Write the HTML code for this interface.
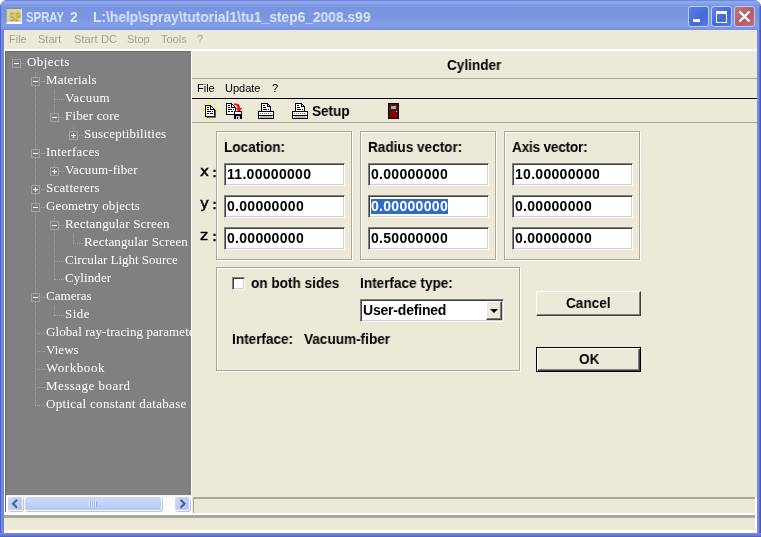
<!DOCTYPE html>
<html><head><meta charset="utf-8"><title>SPRAY 2</title>
<style>
html,body{margin:0;padding:0;}
body{width:761px;height:537px;overflow:hidden;position:relative;background:#fff;font-family:"Liberation Sans",sans-serif;}
.abs,.abs *{position:absolute;}
.lbl,.xl,.tt,.row,.inp span,.mt,#icon span{will-change:transform;}
i,b{display:block;font-style:normal;font-weight:normal;}
#frame{left:0;top:0;width:761px;height:537px;background:linear-gradient(90deg,#4e60ca 0,#4e60ca 1px,#7287dc 1px,#7287dc 757px,#7c90e6 757px,#7589e0 759px,#5a6cd0 759px,#5a6cd0 760px,#4456c4 760px);border-radius:7px 7px 0 0;}
#bottomb{left:0;top:533px;width:761px;height:4px;background:linear-gradient(#7b8ee2,#6a7bd6 50%,#4c5cc4);}
#title{left:0;top:0;width:761px;height:30px;background:linear-gradient(#6f8adc 0,#6f8adc 1px,#8da8f0 1px,#8aa5ee 3px,#7d99e4 5px,#7995df 8px,#7a96df 18px,#809ce7 23px,#84a0ea 26px,#7b96e2 28px,#7590de 30px);border-radius:7px 7px 0 0;}
.tt{top:10px;font:bold 14px "Liberation Sans",sans-serif;color:#d8e4f8;white-space:pre;line-height:15px;transform-origin:0 0;}
#icon{left:6px;top:8px;width:14px;height:13px;background:#d9ccc0;border:1px solid;border-color:#8c8c7a #e8e4e0 #fff #a4a496;border-bottom-width:2px;}
#icon span{left:1.5px;top:0px;font:bold 12px "Liberation Serif",serif;color:#d2d21c;text-shadow:0.5px 0.5px 0 #8a8a30;line-height:14px;transform:scaleX(0.8);transform-origin:0 0;}
.cb{top:6px;width:19px;height:19px;border:1px solid #b9caf6;border-radius:3px;}
#client{left:4px;top:30px;width:753px;height:503px;background:#ece9d8;}
#menubar span{will-change:transform;top:33px;font-size:11px;color:#a5a293;white-space:pre;}
#wline{left:4px;top:49px;width:753px;height:2px;background:#fff;}
#tree{left:5px;top:51px;width:186px;height:461px;background:#808080;border-left:1px solid #6b6b6b;border-top:1px solid #6b6b6b;box-sizing:border-box;overflow:hidden;font:13px "Liberation Serif",serif;color:#fff;letter-spacing:0.18px;}
.row{height:18px;line-height:18px;white-space:nowrap;}
.vl{width:1px;background:repeating-linear-gradient(#a2a2a2 0,#a2a2a2 1px,transparent 1px,transparent 2px);}
.hl{height:1px;background:repeating-linear-gradient(90deg,#a2a2a2 0,#a2a2a2 1px,transparent 1px,transparent 2px);}
.bx{width:7px;height:7px;border:1px solid #a0a0a0;background:#808080;}
.bx:before{content:"";position:absolute;left:1px;top:3px;width:5px;height:1px;background:#fff;}
.pl:after{content:"";position:absolute;left:3px;top:1px;width:1px;height:5px;background:#fff;}
#hscroll{left:6px;top:495px;width:185px;height:17px;background:linear-gradient(#f4f3ee,#fefefb 4px,#fefefb);}
.sbtn{top:2px;width:14px;height:13px;border-radius:2px;background:linear-gradient(135deg,#cddafc,#b9cbf7 70%,#aebff0);box-shadow:0 0 0 1px #fff,1px 1px 0 1px #b4c4e8;}
#thumb{left:19px;top:2px;width:136px;height:13px;border-radius:2px;background:linear-gradient(#cbd9fc,#c2d2fa 50%,#b3c6f5);box-shadow:0 0 0 1px #fff,1px 1px 0 1px #b4c4e8;}
.hline{left:192px;width:565px;height:1px;}
.lbl{font:bold 14px "Liberation Sans",sans-serif;color:#000;white-space:pre;line-height:16px;transform:scaleX(0.97);transform-origin:0 0;}
.xl{font:14px "DejaVu Sans","Liberation Sans",sans-serif;line-height:16px;color:#000;white-space:pre;-webkit-text-stroke:0.45px #000;transform:scaleX(1.08);transform-origin:0 0;}
.mt{top:82px;font-size:11px;white-space:pre;line-height:13px;color:#000;}
.gb{border:1px solid #aca899;box-shadow:1px 1px 0 #fff, inset 1px 1px 0 #fff;box-sizing:border-box;}
.inp{width:121px;height:23px;box-sizing:border-box;background:#fff;border:1px solid;border-color:#808080 #fff #fff #808080;box-shadow:inset 1px 1px 0 #404040, inset -1px -1px 0 #d4d0c8;}
.inp span{left:2px;top:2px;font:bold 14px "Liberation Sans",sans-serif;letter-spacing:0.3px;line-height:16px;color:#000;white-space:pre;}
.btn{width:105px;box-sizing:border-box;background:#ece9d8;}
</style></head><body>
<div class="abs" id="frame"></div>
<div class="abs" id="title"></div>
<div class="abs" id="bottomb"></div>
<div class="abs" style="left:0;top:6px;width:1px;height:24px;background:#5669d0"></div><div class="abs" style="left:760px;top:6px;width:1px;height:24px;background:#4c5fca"></div><div class="abs" style="left:759px;top:5px;width:1px;height:25px;background:#6277d8"></div>
<div class="abs" id="icon"><span>SP</span></div>
<div class="abs tt" style="left:25.5px;transform:scaleX(0.81)">SPRAY</div><div class="abs tt" style="left:70px;transform:scaleX(0.95)">2</div>
<div class="abs tt" style="left:93px;transform:scaleX(0.985)">L:\help\spray\tutorial1\tu1_step6_2008.s99</div>
<div class="abs cb" style="left:688px;background:linear-gradient(135deg,#5f80e8,#4468d8 60%,#5a7ce6)"><i style="left:4px;top:12px;width:7px;height:3px;background:#fff"></i></div>
<div class="abs cb" style="left:711px;background:linear-gradient(135deg,#5f80e8,#4468d8 60%,#5a7ce6)"><i style="left:4px;top:4px;width:9px;height:8px;border:1px solid #fff;border-top-width:3px"></i></div>
<div class="abs cb" style="left:734px;background:linear-gradient(135deg,#c2727c,#b4606c 60%,#c0707a)"><svg style="left:3px;top:3px" width="13" height="13" viewBox="0 0 13 13"><path d="M1.5 1.5L11.5 11.5M11.5 1.5L1.5 11.5" stroke="#fff" stroke-width="2.2" fill="none"/></svg></div>
<div class="abs" id="client"></div>
<div class="abs" id="menubar"><span style="left:8.5px">File</span><span style="left:37.5px">Start</span><span style="left:73.5px;letter-spacing:0.1px">Start DC</span><span style="left:126.5px">Stop</span><span style="left:161px">Tools</span><span style="left:197px">?</span></div>
<div class="abs" id="wline"></div>
<div class="abs" id="tree">
<i class="vl" style="left:29px;top:19px;height:335px;background-position:0 -1px"></i>
<i class="vl" style="left:48px;top:37px;height:24px;background-position:0 -1px"></i>
<i class="vl" style="left:67px;top:73px;height:6px;background-position:0 -1px"></i>
<i class="vl" style="left:48px;top:109px;height:6px;background-position:0 -1px"></i>
<i class="vl" style="left:48px;top:163px;height:65px;background-position:0 -1px"></i>
<i class="vl" style="left:67px;top:181px;height:11px;background-position:0 -1px"></i>
<i class="vl" style="left:48px;top:253px;height:11px;background-position:0 -1px"></i>
<i class="hl" style="left:15px;top:11px;width:5px;background-position:0px 0"></i>
<b class="bx mi" style="left:6px;top:7px"></b>
<div class="row" style="left:20.5px;top:1px;letter-spacing:0.42px">Objects</div>
<i class="hl" style="left:34px;top:29px;width:5px;background-position:-1px 0"></i>
<b class="bx mi" style="left:25px;top:25px"></b>
<div class="row" style="left:39.5px;top:19px;letter-spacing:0.19px">Materials</div>
<i class="hl" style="left:49px;top:47px;width:9px;background-position:0px 0"></i>
<div class="row" style="left:58.5px;top:37px;letter-spacing:0.42px">Vacuum</div>
<i class="hl" style="left:53px;top:65px;width:5px;background-position:0px 0"></i>
<b class="bx mi" style="left:44px;top:61px"></b>
<div class="row" style="left:58.5px;top:55px;letter-spacing:0.16px">Fiber core</div>
<i class="hl" style="left:72px;top:83px;width:5px;background-position:-1px 0"></i>
<b class="bx pl" style="left:63px;top:79px"></b>
<div class="row" style="left:77.5px;top:73px;letter-spacing:0.18px">Susceptibilities</div>
<i class="hl" style="left:34px;top:101px;width:5px;background-position:-1px 0"></i>
<b class="bx mi" style="left:25px;top:97px"></b>
<div class="row" style="left:39.5px;top:91px;letter-spacing:0.27px">Interfaces</div>
<i class="hl" style="left:53px;top:119px;width:5px;background-position:0px 0"></i>
<b class="bx pl" style="left:44px;top:115px"></b>
<div class="row" style="left:58.5px;top:109px;letter-spacing:0.10px">Vacuum-fiber</div>
<i class="hl" style="left:34px;top:137px;width:5px;background-position:-1px 0"></i>
<b class="bx pl" style="left:25px;top:133px"></b>
<div class="row" style="left:39.5px;top:127px;letter-spacing:0.27px">Scatterers</div>
<i class="hl" style="left:34px;top:155px;width:5px;background-position:-1px 0"></i>
<b class="bx mi" style="left:25px;top:151px"></b>
<div class="row" style="left:39.5px;top:145px;letter-spacing:0.11px">Geometry objects</div>
<i class="hl" style="left:53px;top:173px;width:5px;background-position:0px 0"></i>
<b class="bx mi" style="left:44px;top:169px"></b>
<div class="row" style="left:58.5px;top:163px;letter-spacing:0.18px">Rectangular Screen</div>
<i class="hl" style="left:68px;top:191px;width:9px;background-position:-1px 0"></i>
<div class="row" style="left:77.5px;top:181px;letter-spacing:0.14px">Rectangular Screen</div>
<i class="hl" style="left:49px;top:209px;width:9px;background-position:0px 0"></i>
<div class="row" style="left:58.5px;top:199px;letter-spacing:-0.03px">Circular Light Source</div>
<i class="hl" style="left:49px;top:227px;width:9px;background-position:0px 0"></i>
<div class="row" style="left:58.5px;top:217px;letter-spacing:0.09px">Cylinder</div>
<i class="hl" style="left:34px;top:245px;width:5px;background-position:-1px 0"></i>
<b class="bx mi" style="left:25px;top:241px"></b>
<div class="row" style="left:39.5px;top:235px;letter-spacing:0.03px">Cameras</div>
<i class="hl" style="left:49px;top:263px;width:9px;background-position:0px 0"></i>
<div class="row" style="left:58.5px;top:253px;letter-spacing:0.43px">Side</div>
<i class="hl" style="left:30px;top:281px;width:9px;background-position:-1px 0"></i>
<div class="row" style="left:39.5px;top:271px;letter-spacing:0.08px">Global ray-tracing parameters</div>
<i class="hl" style="left:30px;top:299px;width:9px;background-position:-1px 0"></i>
<div class="row" style="left:39.5px;top:289px;letter-spacing:0.05px">Views</div>
<i class="hl" style="left:30px;top:317px;width:9px;background-position:-1px 0"></i>
<div class="row" style="left:39.5px;top:307px;letter-spacing:0.56px">Workbook</div>
<i class="hl" style="left:30px;top:335px;width:9px;background-position:-1px 0"></i>
<div class="row" style="left:39.5px;top:325px;letter-spacing:0.47px">Message board</div>
<i class="hl" style="left:30px;top:353px;width:9px;background-position:-1px 0"></i>
<div class="row" style="left:39.5px;top:343px;letter-spacing:0.31px">Optical constant database</div>
</div>
<div class="abs" id="hscroll">
 <div class="sbtn" style="left:2px"><svg style="left:3px;top:2px" width="8" height="10" viewBox="0 0 8 10"><path d="M6 0.800L2 4.750L6 8.700" stroke="#4d6185" stroke-width="2.100" fill="none"/></svg></div>
 <div id="thumb"><i style="left:64px;top:4px;width:8px;height:6px;background:repeating-linear-gradient(90deg,#eef4fe 0,#eef4fe 1px,#8cb0f8 1px,#8cb0f8 2px)"></i></div>
 <div class="sbtn" style="left:169px"><svg style="left:4px;top:2px" width="8" height="10" viewBox="0 0 8 10"><path d="M1.500 0.800L5.500 4.750L1.500 8.700" stroke="#4d6185" stroke-width="2.100" fill="none"/></svg></div>
</div>
<div class="abs" style="left:191px;top:51px;width:1px;height:462px;background:#fff"></div>
<!-- right panel -->
<div class="abs lbl" style="left:446.5px;top:57px;">Cylinder</div>
<div class="abs hline" style="top:78px;background:#aca899"></div>
<div class="abs mt" style="left:196.5px">File</div>
<div class="abs mt" style="left:224.5px">Update</div>
<div class="abs mt" style="left:271.5px">?</div>
<div class="abs hline" style="top:98px;background:#000"></div>
<div class="abs hline" style="top:122px;background:#aca899"></div>
<!-- toolbar icons -->
<svg class="abs" style="left:200px;top:100px" width="204" height="22" viewBox="200 100 204 22" shape-rendering="crispEdges">
 <g>
  <path d="M203 103l2.500 2.500M216.500 103l-2.500 2.500M203 118.500l2.500-2.500M216.500 118.500l-2 -2M201.500 110.500h3.500M215.500 110.500h3M208.500 101.500v3M209.500 117v2" stroke="#f2f03a" stroke-width="1.600" shape-rendering="auto"/>
  <path d="M205.500 105.500h5l4 4v7h-9z" fill="#fff" stroke="#000"/>
  <path d="M206.500 117.300h9v-7.300" fill="none" stroke="#555" shape-rendering="auto"/>
  <path d="M210.500 105.500v4h4" fill="none" stroke="#000"/>
  <path d="M207 107.500h2M207 109.500h2M207 111.500h4M212 111.500h1M207 113.500h2M210 113.500h3" stroke="#000"/>
 </g>
 <g>
  <path d="M226.500 103.500h5l4 4v7h-9z" fill="#fff" stroke="#000"/>
  <path d="M231.500 103.500v4h4" fill="none" stroke="#000"/>
  <path d="M228 105.500h2M228 107.500h2M228 109.500h4M233 109.500h1M228 111.500h2M231 111.500h2" stroke="#000"/>
  <path d="M234 103.500c4 -0.500 6 0.500 6 4.500h2.500l-3.500 4l-3.500 -4h2c0 -2 -1 -3 -3.500 -3z" fill="#f01010" shape-rendering="auto"/>
  <rect x="234" y="111" width="8" height="8" fill="#000"/>
  <rect x="235" y="111" width="3" height="1" fill="#2030c0"/>
  <rect x="235" y="112" width="6" height="2" fill="#fff"/>
  <rect x="236" y="116" width="4" height="3" fill="#c8c8c8"/>
  <rect x="237" y="117" width="1" height="2" fill="#000"/>
 </g>
 <g>
  <path d="M261.500 103.500h6l3 3v5h-9z" fill="#fff" stroke="#000"/>
  <path d="M267.500 103.500v3h3" fill="none" stroke="#000"/>
  <path d="M263 105.500h2M263 107.500h3M263 109.500h4M268 109.500h1" stroke="#000"/>
  <rect x="258.500" y="111.500" width="15" height="7" fill="#fff" stroke="#000"/>
  <path d="M260 113.500h12" stroke="#707070" stroke-dasharray="1 1"/>
  <rect x="259" y="115" width="14" height="1" fill="#000"/>
  <rect x="260" y="116" width="12" height="2" fill="#b8b8b8"/>
  <rect x="270" y="113" width="1" height="1" fill="#e06060"/>
 </g>
 <g transform="translate(34 0)">
  <path d="M261.500 103.500h6l3 3v5h-9z" fill="#fff" stroke="#000"/>
  <path d="M267.500 103.500v3h3" fill="none" stroke="#000"/>
  <path d="M263 105.500h2M263 107.500h3M263 109.500h4M268 109.500h1" stroke="#000"/>
  <rect x="258.500" y="111.500" width="15" height="7" fill="#fff" stroke="#000"/>
  <path d="M260 113.500h12" stroke="#707070" stroke-dasharray="1 1"/>
  <rect x="259" y="115" width="14" height="1" fill="#000"/>
  <rect x="260" y="116" width="12" height="2" fill="#b8b8b8"/>
  <rect x="270" y="113" width="1" height="1" fill="#e06060"/>
 </g>
 <g>
  <rect x="388.500" y="103.500" width="10" height="15" fill="#800000" stroke="#000"/>
  <rect x="391" y="106" width="5" height="3" fill="#30e0f0"/>
  <rect x="396" y="111" width="1" height="1" fill="#ffd0d0"/>
 </g>
</svg>
<div class="abs lbl" style="left:312px;top:103px">Setup</div>
<!-- group boxes -->
<div class="abs gb" style="left:216px;top:131px;width:136px;height:129px"></div>
<div class="abs gb" style="left:360px;top:131px;width:136px;height:129px"></div>
<div class="abs gb" style="left:504px;top:131px;width:136px;height:129px"></div>
<div class="abs lbl" style="left:223.5px;top:139px">Location:</div>
<div class="abs lbl" style="left:367.5px;top:139px">Radius vector:</div>
<div class="abs lbl" style="left:512px;top:139px;letter-spacing:-0.2px">Axis vector:</div>
<div class="abs xl" style="left:199.5px;top:163px">x</div><div class="abs xl" style="left:212px;top:164px">:</div>
<div class="abs xl" style="left:199.5px;top:195px">y</div><div class="abs xl" style="left:212px;top:196px">:</div>
<div class="abs xl" style="left:199.5px;top:227px">z</div><div class="abs xl" style="left:212px;top:228px">:</div>
<div class="abs inp" style="left:224px;top:163px"><span>11.00000000</span></div>
<div class="abs inp" style="left:224px;top:195px"><span>0.00000000</span></div>
<div class="abs inp" style="left:224px;top:227px"><span>0.00000000</span></div>
<div class="abs inp" style="left:368px;top:163px"><span>0.00000000</span></div>
<div class="abs inp" style="left:368px;top:195px"><i style="left:2px;top:3px;width:77px;height:15px;background:#316ac5"></i><span style="color:#fff">0.00000000</span></div>
<div class="abs inp" style="left:368px;top:227px"><span>0.50000000</span></div>
<div class="abs inp" style="left:512px;top:163px"><span>10.00000000</span></div>
<div class="abs inp" style="left:512px;top:195px"><span>0.00000000</span></div>
<div class="abs inp" style="left:512px;top:227px"><span>0.00000000</span></div>
<!-- lower group -->
<div class="abs gb" style="left:216px;top:267px;width:304px;height:104px"></div>
<div class="abs" style="left:232px;top:277px;width:13px;height:13px;box-sizing:border-box;background:#fff;border:1px solid;border-color:#808080 #fff #fff #808080;box-shadow:inset 1px 1px 0 #404040, inset -1px -1px 0 #d4d0c8"></div>
<div class="abs lbl" style="left:251px;top:275px;">on both sides</div>
<div class="abs lbl" style="left:359.5px;top:275px">Interface type:</div>
<div class="abs inp" style="left:360px;top:299px;width:144px"><span style="left:2px;letter-spacing:-0.2px">User-defined</span>
 <i style="left:125px;top:1px;width:16px;height:19px;background:#ece9d8;box-sizing:border-box;border:1px solid;border-color:#fff #404040 #404040 #fff;box-shadow:inset -1px -1px 0 #808080"></i>
 <i style="left:129px;top:9px;width:0;height:0;border:4px solid transparent;border-top:4px solid #000;border-bottom:0"></i>
</div>
<div class="abs lbl" style="left:231.5px;top:331px">Interface:</div>
<div class="abs lbl" style="left:303.5px;top:331px">Vacuum-fiber</div>
<!-- buttons -->
<div class="abs btn" style="left:536px;top:291px;height:25px;border:1px solid;border-color:#fff #404040 #404040 #fff;box-shadow:inset -1px -1px 0 #808080;"></div>
<div class="abs btn" style="left:536px;top:347px;height:25px;border:1px solid #000;box-shadow:inset 1px 1px 0 #fff, inset -1px -1px 0 #404040, inset -2px -2px 0 #808080;"></div>
<div class="abs lbl" style="left:566px;top:295px">Cancel</div>
<div class="abs lbl" style="left:578.5px;top:351px">OK</div>
<!-- status bars -->
<div class="abs" style="left:193px;top:497px;width:562px;height:2px;background:#aca899"></div>
<div class="abs" style="left:193px;top:497px;width:1px;height:16px;background:#aca899"></div>
<div class="abs" style="left:4px;top:512px;width:189px;height:3px;background:#fff"></div><div class="abs" style="left:193px;top:513px;width:564px;height:2px;background:#fff"></div>
<div class="abs" style="left:4px;top:515px;width:751px;height:3px;background:#aca899"></div>
<div class="abs" style="left:4px;top:530px;width:753px;height:3px;background:#fff"></div>
<div class="abs" style="left:755px;top:497px;width:2px;height:36px;background:#fff"></div>
<div class="abs" style="left:4px;top:51px;width:1px;height:464px;background:#fff"></div>
</body></html>
